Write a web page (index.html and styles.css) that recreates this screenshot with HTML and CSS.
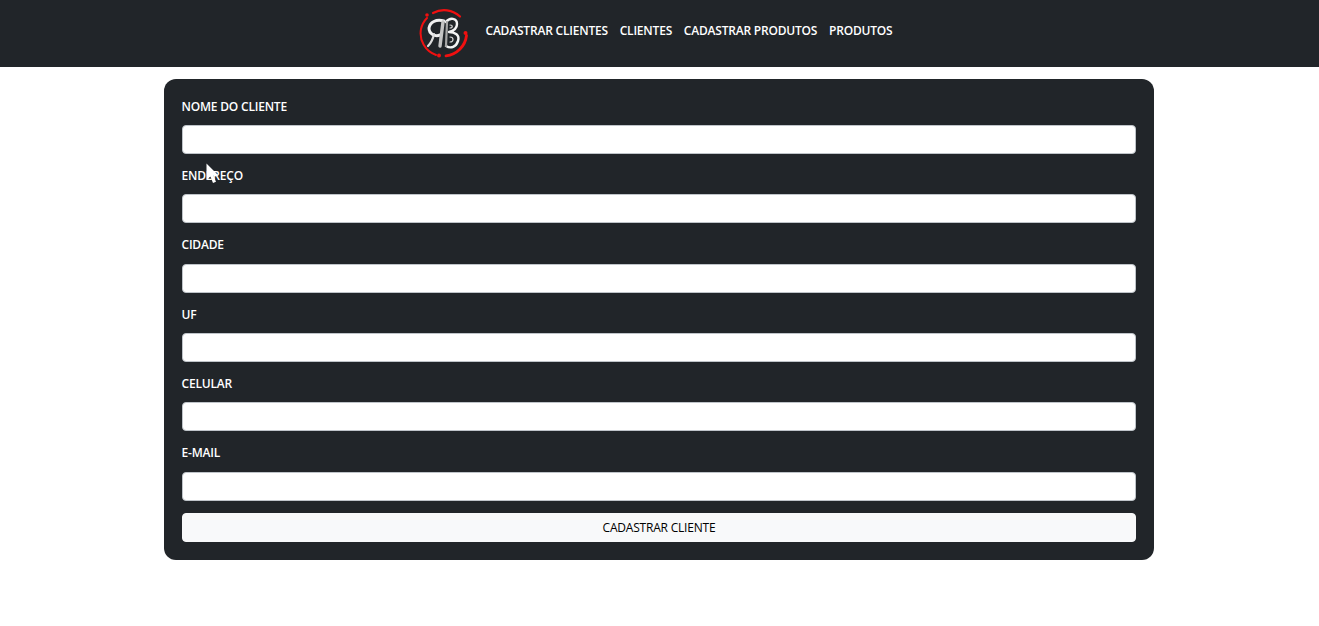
FILE: index.html
```html
<!DOCTYPE html>
<html lang="pt-BR">
<head>
<meta charset="utf-8">
<title>Cadastrar Clientes</title>
<link rel="stylesheet" href="styles.css">
</head>
<body>
<header class="topbar">
  <svg class="logo" viewBox="0 0 50 50" width="50" height="50" aria-hidden="true">
    <g fill="none" stroke="#f01010" stroke-linecap="round">
      <path d="M14 5 A23 23 0 0 1 41 8.5" stroke-width="2.2"/>
      <path d="M47.5 27.5 A23 23 0 0 1 27 47.8" stroke-width="2.8"/>
      <path d="M17 47 A23 23 0 0 1 2 21 A23 23 0 0 1 8 10" stroke-width="2"/>
    </g>
    <g fill="#f01010">
      <circle cx="8" cy="7" r="1.8"/>
      <circle cx="46.5" cy="25" r="2"/>
      <circle cx="20" cy="47.5" r="2"/>
    </g>
    <g fill="none" stroke-linecap="round" stroke-linejoin="round">
      <path d="M25 13 C17 11 11 14 10 20 C10 26 16 29 21 27" stroke="#f0f0f0" stroke-width="3"/>
      <path d="M24 14 L21 38" stroke="#c4c4c4" stroke-width="3.4"/>
      <path d="M15 26 C14 31 12 35 9 38" stroke="#dcdcdc" stroke-width="2.2"/>
      <path d="M27 14 C31 9 38 10 38 16 C38 21 34 23 30 24 C36 24 41 27 39 33 C37 39 32 41 27 38" stroke="#f4f4f4" stroke-width="2.4"/>
      <path d="M28 14 L27 38" stroke="#a6a6a6" stroke-width="2.2"/>
      <path d="M31 17 C34 17 34 20 31 20 M31 29 C35 29 35 34 31 34" stroke="#d8d8d8" stroke-width="1.2"/>
    </g>
  </svg>
  <nav class="menu">
    <a href="#">CADASTRAR CLIENTES</a>
    <a href="#">CLIENTES</a>
    <a href="#">CADASTRAR PRODUTOS</a>
    <a href="#">PRODUTOS</a>
  </nav>
</header>
<main class="page">
  <form class="card">
    <div class="field"><label>NOME DO CLIENTE</label><input type="text"></div>
    <div class="field"><label>ENDEREÇO</label><input type="text"></div>
    <div class="field"><label>CIDADE</label><input type="text"></div>
    <div class="field"><label>UF</label><input type="text"></div>
    <div class="field"><label>CELULAR</label><input type="text"></div>
    <div class="field"><label>E-MAIL</label><input type="text"></div>
    <button type="button" class="submit">CADASTRAR CLIENTE</button>
  </form>
</main>
<svg class="cursor" viewBox="0 0 13 21" width="13" height="21" aria-hidden="true">
  <path d="M0.5 0.5 L0.5 17 L4.4 13.4 L7 20 L10 18.8 L7.3 12.6 L12.5 12.6 Z" fill="#fff"/>
</svg>
</body>
</html>
```
FILE: styles.css
```css
* { box-sizing: border-box; }
html, body { margin: 0; padding: 0; }
body {
  background: #fff;
  font-family: "Open Sans", "Noto Sans", sans-serif;
  font-size: 12px;
  height: 626px;
  overflow: hidden;
}
.topbar {
  height: 67px;
  background: #212529;
  display: flex;
  justify-content: center;
  align-items: center;
  gap: 16px;
  padding-right: 7px;
}
.logo { display: block; flex: none; margin-top: -1px; }
.menu { display: flex; gap: 11.8px; margin-bottom: 6px; }
.menu a {
  color: #fff;
  text-decoration: none;
  font-size: 12px;
  font-weight: 600;
  line-height: 18px;
  letter-spacing: -0.2px;
  white-space: nowrap;
}
.page {
  display: flex;
  justify-content: center;
  padding: 12px 1px 0 0;
}
.card {
  width: 990px;
  background: #212529;
  border-radius: 12px;
  padding: 18px;
  display: flex;
  flex-direction: column;
}
.field { margin-bottom: 12.33px; }
.field label {
  display: block;
  height: 28px;
  padding-top: 0.7px;
  margin-left: -0.5px;
  color: #fff;
  font-size: 12px;
  font-weight: 600;
  line-height: 18px;
  letter-spacing: -0.2px;
}
.field input {
  display: block;
  width: 100%;
  height: 29px;
  background: #fff;
  border: 1px solid #bfc4c9;
  border-radius: 4px;
  padding: 0 8px;
  outline: none;
}
.submit {
  display: block;
  width: 100%;
  height: 29px;
  background: #f8f9fa;
  border: 1px solid #f8f9fa;
  border-radius: 4px;
  color: #000;
  font-family: inherit;
  font-size: 12px;
  letter-spacing: -0.2px;
  padding: 0;
}
.cursor {
  position: absolute;
  left: 206px;
  top: 163px;
}
```
